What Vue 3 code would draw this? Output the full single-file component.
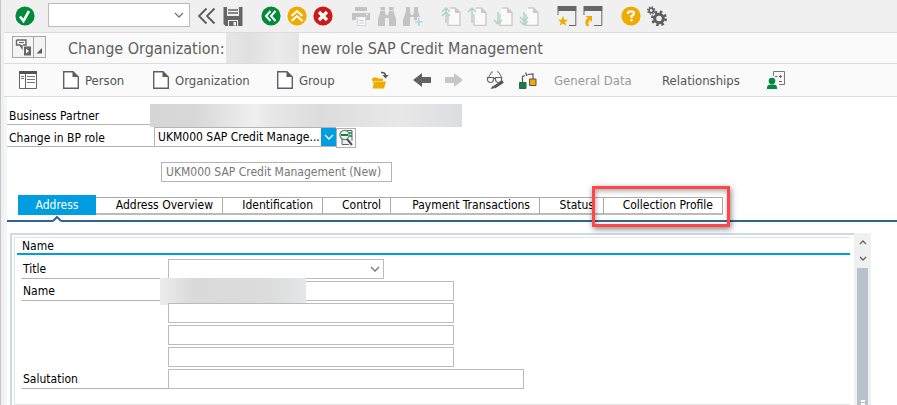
<script setup>
import { ref } from 'vue'

const command = ref('')
const role = ref('UKM000')
const title = ref('')
const names = ref(['', '', '', ''])
const salutation = ref('')
const activeTab = ref('Address')
const tabs = [
  { label: 'Address', cls: 'w-address' },
  { label: 'Address Overview', cls: 'w-overview' },
  { label: 'Identification', cls: 'w-ident' },
  { label: 'Control', cls: 'w-control' },
  { label: 'Payment Transactions', cls: 'w-payment' },
  { label: 'Status', cls: 'w-status' },
  { label: 'Collection Profile', cls: 'w-collection' },
]
const creators = [
  { label: 'Person', cls: 'c-person' },
  { label: 'Organization', cls: 'c-org' },
  { label: 'Group', cls: 'c-group' },
]
const pageMoves = [
  { label: 'First page', d: 'M1 6 L5 2 L9 6 M1 10 L5 6 L9 10 M5 3 V17' },
  { label: 'Previous page', d: 'M1 6 L5 2 L9 6 M5 2 V17' },
  { label: 'Next page', d: 'M1 14 L5 18 L9 14 M5 6 V18' },
  { label: 'Last page', d: 'M1 11 L5 15 L9 11 M1 15 L5 19 L9 15 M5 6 V18' },
]
</script>

<template>
  <div class="window">
    <header class="system-bar">
      <button class="icon" aria-label="Enter">
        <svg viewBox="0 0 20 20"><circle cx="10" cy="10" r="9.6" fill="#018a3b" /><path d="M5 10.5 L8.5 15 L14 5" fill="none" stroke="#fff" stroke-width="2.6" /></svg>
      </button>
      <div class="command">
        <input v-model="command" aria-label="Command field" />
        <svg class="chev" viewBox="0 0 10 6"><path d="M1 1 L5 5 L9 1" /></svg>
      </div>
      <div class="group">
        <button class="icon" aria-label="Collapse"><svg viewBox="0 0 20 20"><path d="M9.5 2.500 L2 10 L9.5 17.500 M17.5 2.500 L10 10 L17.5 17.500" fill="none" stroke="#5b5b5b" stroke-width="1.8" /></svg></button>
        <button class="icon" aria-label="Save"><svg viewBox="0 0 20 20"><path d="M0.5 1 H19.5 V20 H2.5 L0.5 18 Z" fill="#666" /><path d="M4 1 H16 V10 H4 Z" fill="#f0f0f0" /><path d="M5 4 H15 M5 7 H15" stroke="#666" stroke-width="1.4" /><path d="M5 14 H15 V20 H5 Z" fill="#f0f0f0" /><path d="M6 15 H14 V20 H6 Z" fill="#666" /><path d="M10.5 16 H13 V19.5 H10.5 Z" fill="#f0f0f0" /></svg></button>
      </div>
      <div class="group">
        <button class="icon" aria-label="Back"><svg viewBox="0 0 20 20"><circle cx="10" cy="10" r="9.6" fill="#018a3b" /><path d="M9.5 5 L5 10 L9.5 15 M14.5 5 L10 10 L14.5 15" fill="none" stroke="#fff" stroke-width="2" /></svg></button>
        <button class="icon" aria-label="Exit"><svg viewBox="0 0 20 20"><circle cx="10" cy="10" r="9.6" fill="#f0ab00" /><path d="M4.5 10 L10 5 L15.5 10 M4.5 15 L10 10 L15.5 15" fill="none" stroke="#fff" stroke-width="2" /></svg></button>
        <button class="icon" aria-label="Cancel"><svg viewBox="0 0 20 20"><circle cx="10" cy="10" r="9.6" fill="#cc1919" /><path d="M6 6 L14 14 M14 6 L6 14" stroke="#fff" stroke-width="3.2" /></svg></button>
      </div>
      <div class="group">
        <button class="icon" aria-label="Print"><svg viewBox="0 0 20 20"><path d="M4 1 H16 V5 H4 Z M1 7 H19 V14 H15 V11 H5 V14 H1 Z" fill="#c3c3c3" /><path d="M15 8.5 H17" stroke="#fff" /><path d="M6.5 12 V19.5 H14.5 V12" fill="#fff" stroke="#d2d2d2" /><path d="M8 14.5 H13 M8 17 H13" stroke="#a3d8f0" /></svg></button>
        <button class="icon" aria-label="Find"><svg viewBox="0 0 20 20"><path d="M3.500 1 H8 V6 L9 9 H11 L12 6 V1 H16.500 V5 L19 13 V20 H12 V12 H8 V20 H1 V13 L3.500 5 Z" fill="#c3c3c3" /><path d="M3.5 4.500 H8 M12 4.500 H16.500" stroke="#ddd" /></svg></button>
        <button class="icon" aria-label="Find next"><svg viewBox="0 0 20 20"><path d="M3 1 H7 V6 L8 9 H10 L11 6 V1 H15 V5 L17 11 H14 V14 H11 V11 H7 V20 H0 V14 L3 5 Z" fill="#c3c3c3" /><path d="M12 16 H19.5 M15.8 12 V20" stroke="#a3d8f0" stroke-width="1.5" /></svg></button>
      </div>
      <div class="group">
        <button v-for="p in pageMoves" :key="p.label" class="icon" :aria-label="p.label">
          <svg viewBox="0 0 20 20"><path d="M9 2 H14.500 L19 6.500 V19.500 H7 V8" fill="#fafafa" stroke="#cbcbcb" stroke-width="1.4" /><path d="M14 2 V7 H19 Z" fill="#c8c8c8" /><path :d="p.d" fill="none" stroke="#a9d6bb" stroke-width="1.4" /></svg>
        </button>
      </div>
      <div class="group">
        <button class="icon" aria-label="New session"><svg viewBox="0 0 20 20"><path d="M0.5 0 H19.5 V5 H0.5 Z" fill="#666" /><path d="M1 5 V9 M18.8 5 V19.5 H12" fill="none" stroke="#666" /><path d="M6 10 L7.4 13.7 L11 13.8 L8.2 16 L9.2 19.8 L6 17.6 L2.8 19.8 L3.8 16 L1 13.8 L4.6 13.7 Z" fill="#f0ab00" /></svg></button>
        <button class="icon" aria-label="Create shortcut"><svg viewBox="0 0 20 20"><path d="M0.5 0 H19.5 V5 H0.5 Z" fill="#666" /><path d="M1 5 V9 M18.8 5 V19.5 H11" fill="none" stroke="#666" /><path d="M2.5 10 H9 V16 L7 14 Q4.5 16 6 20 H3.5 Q0.5 15.500 4.800 12 Z" fill="#f0ab00" /></svg></button>
      </div>
      <div class="group">
        <button class="icon" aria-label="Help"><svg viewBox="0 0 20 20"><circle cx="10" cy="10" r="9.6" fill="#f0ab00" /><path d="M7 8 V7 Q7 5.500 8.500 5.500 H11 Q13 5.500 13 7.500 Q13 9 10.500 10 V12 M10.500 13 V15.200" fill="none" stroke="#fff" stroke-width="2.2" /></svg></button>
        <button class="icon" aria-label="Settings"><svg viewBox="0 0 20 20"><circle cx="12" cy="12.5" r="4.3" fill="none" stroke="#5e5e5e" stroke-width="3" /><circle cx="12" cy="12.5" r="6.5" fill="none" stroke="#5e5e5e" stroke-width="3" stroke-dasharray="2.5 2.6" /><circle cx="4.2" cy="4.5" r="2.2" fill="none" stroke="#5e5e5e" stroke-width="1.6" /><circle cx="4.2" cy="4.5" r="3.5" fill="none" stroke="#5e5e5e" stroke-width="1.4" stroke-dasharray="1.4 1.35" /></svg></button>
      </div>
    </header>

    <div class="title-bar">
      <div class="services">
        <button aria-label="Services for object"><svg viewBox="0 0 20 20"><path d="M3.5 3 H13 V8 H10 M3.5 3 V8 H7 L9 11 V8" fill="none" stroke="#666" stroke-width="1.4" /><path d="M6 5.500 H11" stroke="#666" /><path d="M11 9.500 H18 V18.500 H11 Z" fill="#666" /><path d="M13 11.500 L16 14 L13 16.500 Z" fill="#fff" /></svg></button>
        <button class="more" aria-label="Services menu"><svg viewBox="0 0 10 20"><path d="M8 11 V16.500 H2.500 Z" fill="#5b5b5b" /></svg></button>
      </div>
      <h1><span>Change Organization:</span><span class="mask mask-org"></span><span>new role SAP Credit Management</span></h1>
    </div>

    <nav class="app-bar">
      <button class="list" aria-label="Locator"><svg class="g20" viewBox="0 0 20 20"><path d="M1.5 1.500 H18.500 V18.500 H1.500 Z" fill="#fff" stroke="#666" /><path d="M1 1 H19 V4 H1 Z" fill="#555" /><path d="M7.5 4 V18" stroke="#666" /><path d="M3 6.500 H6 M3 8.500 H6 M9 6.500 H17 M9 9.500 H17 M9 12.500 H17" stroke="#777" /></svg></button>
      <button v-for="c in creators" :key="c.label" :class="c.cls">
        <svg class="page" viewBox="0 0 16 18"><path d="M0.7 0.700 H10 L15.300 6 V17.300 H0.700 Z" fill="#fff" stroke="#5e5e66" stroke-width="1.4" /><path d="M9.5 0.500 V6 H15.500 Z" fill="#6b5555" /></svg>{{ c.label }}
      </button>
      <button class="open" aria-label="Open"><svg class="g20" viewBox="0 0 20 20"><path d="M2 9 L3 7.500 H7 L8 8.500 H13 V11 H4 L3.500 15 Z" fill="#f0ab00" /><path d="M4.500 11.500 H16 L14 18.500 H2.500 Z" fill="#f0ab00" /><path d="M11 2.500 Q15.500 2 15.500 6" fill="none" stroke="#555" stroke-width="1.6" /><path d="M12.500 5 H18.500 L15.500 8.500 Z" fill="#555" /></svg></button>
      <button class="prev" aria-label="Previous"><svg class="g20" viewBox="0 0 20 20"><path d="M1 10 L10 3 V7 H19 V13 H10 V17 Z" fill="#626262" /></svg></button>
      <button class="next" aria-label="Next"><svg class="g20" viewBox="0 0 20 20"><path d="M19 10 L10 3 V7 H1 V13 H10 V17 Z" fill="#c6c6c6" /></svg></button>
      <button class="toggle" aria-label="Display or change"><svg class="g20" viewBox="0 0 20 20"><path d="M2 8.500 L5.500 2 H7 M11 1.500 L13 2.500 L16 8" fill="none" stroke="#666" /><path d="M1.500 7.500 H7.500 V10 Q7 12.500 4.500 12.500 Q2 12.500 1.500 10 Z M9.500 7.500 H15.500 V10 Q15 12.500 12.500 12.500 Q10 12.500 9.500 10 Z M7.500 8.500 H9.500" fill="none" stroke="#666" stroke-width="1.200" /><path d="M8.500 17 L17 11.500" stroke="#555" stroke-width="3" /><path d="M4.500 19 L7 15.500 L9.500 18 Z" fill="#555" /></svg></button>
      <button class="links" aria-label="Where used"><svg class="g20" viewBox="0 0 20 20"><path d="M4.500 12 V6.500 L7 5.500 M7.500 2.500 L9 6 M9.500 4.500 L15 4 V9" fill="none" stroke="#555" stroke-width="1.2" /><path d="M1.500 12.500 H8 V18.500 H1.500 Z" fill="#018a3b" stroke="#4c5a4c" /><path d="M11.500 9 H18 V15.500 H11.500 Z" fill="#f0ab00" stroke="#555" /></svg></button>
      <button class="general" disabled>General Data</button>
      <button class="relations">Relationships</button>
      <button class="person" aria-label="Partner overview"><svg class="g20" viewBox="0 0 20 20"><path d="M7.5 6 V1.500 H18.500 V14.500 H13" fill="#f6f6f6" stroke="#777" /><path d="M9 6.500 H11.500 M13 6.500 H16 M14.500 5 V8 M13 11.500 H16" stroke="#666" /><circle cx="6" cy="11" r="3.3" fill="#018a3b" /><path d="M1 19 V16.500 Q2 14.500 4.500 14.500 H7.500 Q10.500 14.500 11 16.500 V19 Z" fill="#018a3b" /></svg></button>
    </nav>

    <main>
      <section class="head">
        <div class="field">
          <span class="lab">Business Partner</span><span class="mask mask-partner"></span>
        </div>
        <div class="field role-row">
          <label class="lab" for="role">Change in BP role</label>
          <div class="role">
            <select id="role" v-model="role"><option value="UKM000">UKM000 SAP Credit Manage...</option></select>
            <span class="drop"><svg viewBox="0 0 10 6"><path d="M1 1 L5 5 L9 1" /></svg></span>
          </div>
          <button class="detail" aria-label="Role details"><svg viewBox="0 0 16 18"><path d="M7 1.500 H14 V12 M4 10 V15.500 H11" fill="#e2eee6" stroke="#666" /><path d="M10 4 H14 M10 7 H14" stroke="#018a3b" stroke-width="1.500" /><circle cx="6.500" cy="6" r="4.600" fill="#eaf5ef" stroke="#777" stroke-width="1.2" /><path d="M3 6 H10" stroke="#018a3b" stroke-width="2" /><path d="M9 10 L14 16" stroke="#555" stroke-width="2.2" /></svg></button>
        </div>
        <input class="role-text" value="UKM000 SAP Credit Management (New)" aria-label="Role description" disabled />
      </section>

      <div class="tabs" role="tablist">
        <button v-for="t in tabs" :key="t.label" role="tab" :aria-selected="activeTab === t.label" :class="[t.cls, { active: activeTab === t.label }]" @click="activeTab = t.label">
          {{ t.label }}
          <svg v-if="activeTab === t.label" class="notch" viewBox="0 0 10 6"><path d="M1 4 H9 V6 H1 Z" fill="#fff" /><path d="M1 5 L5 1 L9 5" fill="none" stroke="#316494" stroke-width="2" /></svg>
          <span v-if="t.label === 'Collection Profile'" class="highlight"></span>
        </button>
      </div>

      <div class="body">
        <div class="panel">
          <fieldset>
            <h2>Name</h2>
            <div class="rows">
              <div class="row">
                <label class="lab" for="title">Title</label>
                <div class="title-box">
                  <select id="title" v-model="title"><option value=""></option></select>
                  <svg class="chev" viewBox="0 0 10 6"><path d="M1 1 L5 5 L9 1" /></svg>
                </div>
              </div>
              <div class="row">
                <label class="lab" for="name0">Name</label>
                <input id="name0" v-model="names[0]" class="mid" />
                <span class="mask mask-name"></span>
              </div>
              <div v-for="i in 3" :key="i" class="row">
                <span class="lab bare"></span>
                <input v-model="names[i]" class="mid" :aria-label="'Name line ' + (i + 1)" />
              </div>
              <div class="row">
                <label class="lab" for="salutation">Salutation</label>
                <input id="salutation" v-model="salutation" class="wide" />
              </div>
            </div>
          </fieldset>
        </div>
        <div class="scroll">
          <button aria-label="Scroll up"><svg viewBox="0 0 10 6"><path d="M2 5 L5 2 L8 5" /></svg></button>
          <button aria-label="Scroll down"><svg viewBox="0 0 10 6"><path d="M2 1 L5 4 L8 1" /></svg></button>
          <div class="thumb"><span></span><span></span></div>
        </div>
      </div>
    </main>
  </div>
</template>

<style>
body { margin: 0; background: #fff; }
</style>

<style scoped>
* { box-sizing: border-box; }
.window {
  min-height: 100vh;
  display: flex;
  flex-direction: column;
  border-left: 1px solid #c4c4c4;
  background: #f0f0f0;
  padding-left: 3px;
  font-family: "DejaVu Sans Condensed", "Noto Sans", sans-serif;
  font-size: 12px;
  color: #000;
}
button { border: 0; padding: 0; margin: 0; background: none; font: inherit; color: inherit; white-space: nowrap; }
svg { display: block; flex: none; }
input, select { font: inherit; border-radius: 0; outline: 0; margin: 0; }
select { appearance: none; }

.system-bar { height: 33px; display: flex; align-items: center; padding-left: 11px; border-bottom: 1px solid #dcdcdc; }
.icon, .icon svg { width: 20px; height: 20px; flex: none; }
.group { display: flex; gap: 6px; margin-right: 18px; }
.command { position: relative; display: flex; width: 142px; margin: 0 7px 2px 13px; }
.command input { width: 100%; height: 24px; border: 1px solid #bbb; background: #fff; padding: 0 20px 0 4px; }
.chev { position: absolute; right: 4px; top: 50%; margin-top: -3px; width: 10px; height: 6px; pointer-events: none; }
.command .chev { right: 6px; }
.chev path { fill: none; stroke: #777; stroke-width: 1.3; }

.title-bar { height: 31px; display: flex; align-items: center; padding-left: 8px; background: #fafafa; border-bottom: 1px solid #dcdcdc; }
.services { display: flex; height: 22px; width: 34px; margin-bottom: 2px; border: 1px solid #a6a6a6; background: #f4f4f4; }
.services button { width: 21px; }
.services svg { width: 20px; height: 20px; }
.services .more { width: 12px; border-left: 1px solid #a6a6a6; }
.services .more svg { width: 10px; }
h1 { display: flex; align-items: center; height: 30px; margin: 0 0 0 22px; font-size: 16px; font-weight: 400; color: #5f5f5f; white-space: nowrap; }
.mask { display: block; flex: none; }
.mask-org { width: 73px; height: 30px; margin: 0 3px 0 1px; background: linear-gradient(90deg, #e6e6e6, #e0e0e0 35%, #ebebeb 70%, #e4e4e4); }

.app-bar { height: 33px; display: flex; align-items: center; padding-left: 14px; background: #fafafa; border-bottom: 1px solid #dcdcdc; font-size: 13px; color: #555; }
.app-bar button { display: flex; align-items: center; gap: 6px; flex: none; }
.g20 { width: 20px; height: 20px; }
.page { width: 16px; height: 18px; }
.list { width: 45px; }
.app-bar .c-person { width: 90px; }
.app-bar .c-org { width: 124px; }
.app-bar .c-group { width: 93px; }
.open { width: 42px; }
.prev, .next { width: 32px; }
.next { margin-right: 10px; }
.toggle { width: 32px; }
.links { width: 36px; }
.app-bar .general { width: 108px; color: #999; }
.relations { width: 104px; }

main { flex: 1; display: flex; flex-direction: column; background: #fff; border-left: 3px solid #f1f6fa; }
.head { padding-top: 6px; }
.field { display: flex; height: 22px; align-items: flex-end; }
.lab { flex: none; height: 20px; line-height: 18px; border-bottom: 1px solid #b4b4b4; padding-left: 2px; }
.head .lab { width: 147px; height: 21px; line-height: 24px; }
.mask-partner { width: 312px; height: 23px; margin-left: -4px; margin-bottom: -2px; background: linear-gradient(90deg, #d6d6d6, #d8d8d8 15%, #f0f0f0 34%, #e8e8e8 38%, #dcdcdc 55%, #e8e8e8 80%, #dcdde0); z-index: 1; }
.role { display: flex; width: 182px; height: 20px; border: 1px solid #b4b4b4; border-right: 0; }
.role select { flex: 1; min-width: 0; border: 0; background: #fff; padding: 0 0 0 3px; color: #000; }
.drop { display: flex; align-items: center; justify-content: center; width: 15px; background: #009de0; }
.drop svg { width: 10px; height: 6px; }
.drop path { fill: none; stroke: #fff; stroke-width: 1.3; }
.detail { display: flex; justify-content: center; align-items: center; width: 20px; height: 20px; margin: 0 0 -1px; border: 1px solid #b0b0b0; }
.field .detail { margin-bottom: -1px; }
.detail svg { width: 16px; height: 18px; }
.role-text { display: block; width: 231px; height: 20px; margin: 15px 0 0 154px; border: 1px solid #b4b4b4; background: #fff; color: #777; padding: 0 4px; }

.tabs { display: flex; align-items: flex-end; height: 41px; margin-top: -1px; padding: 0 0 5px 11px; border-bottom: 2px solid #316494; }
.tabs button { position: relative; flex: none; height: 18px; line-height: 15px; border: 1px solid #aaa; border-left: 0; border-bottom: 2px solid #bbb; padding: 0 9px 0 0; text-align: right; }
.tabs .active { height: 20px; border: 0; background: #009de0; color: #fff; text-align: center; padding: 0; line-height: 20px; }
.w-address { width: 78px; }
.w-overview { width: 127px; }
.w-ident { width: 100px; }
.w-control { width: 68px; }
.w-payment { width: 149px; }
.w-status { width: 64px; }
.w-collection { width: 119px; }
.notch { position: absolute; left: 34px; top: 21px; width: 10px; height: 6px; overflow: visible; }
.highlight { position: absolute; top: -12px; right: -8px; bottom: -14px; left: -12px; border: 3px solid #ff4545; box-shadow: 1px 2px 6px rgba(0, 0, 0, 0.5), inset 1px 2px 5px rgba(0, 0, 0, 0.35); pointer-events: none; }

.body { flex: 1; display: flex; margin: 11px 26px 0 3px; }
.panel { flex: 1; border: solid #ccdbea; border-width: 2px 0 0 2px; padding: 2px 4px 0 2px; display: flex; flex-direction: column; }
fieldset { flex: 1; min-width: 0; margin: 0; padding: 0 0 15px 2px; border: 1px solid #e4e4e4; border-right: 0; }
h2 { margin: 0; height: 17px; line-height: 16px; padding-left: 5px; border-bottom: 2px solid #009de0; font-size: 12px; font-weight: 400; }
.rows { display: flex; flex-direction: column; gap: 2px; padding: 4px 0 0 4px; }
.row { display: flex; position: relative; }
.row .lab { width: 147px; line-height: 21px; }
.bare { border-color: transparent; }
.row input, .row select { height: 20px; border: 1px solid #bbb; background: #fff; padding: 0 4px; }
.title-box { position: relative; width: 216px; display: flex; }
.title-box select { width: 100%; }
.mid { width: 286px; }
.wide { width: 356px; }
.mask-name { position: absolute; left: 139px; top: -3px; width: 146px; height: 27px; background: linear-gradient(90deg, #ececec, #dadada 22%, #dcdcdc 75%, #e4e6e7); }
.scroll { width: 17px; display: flex; flex-direction: column; background: #f0f0f0; }
.scroll button { display: flex; align-items: center; justify-content: center; height: 17px; flex: none; }
.scroll svg { width: 10px; height: 6px; }
.scroll path { fill: none; stroke: #666; stroke-width: 1.4; }
.thumb { flex: 1; width: 11px; margin: 1px 3px 0; background: #b7c2cd; display: flex; flex-direction: column; justify-content: flex-end; align-items: center; gap: 1px; }
.thumb span { width: 4px; height: 2px; background: #fff; }
</style>
